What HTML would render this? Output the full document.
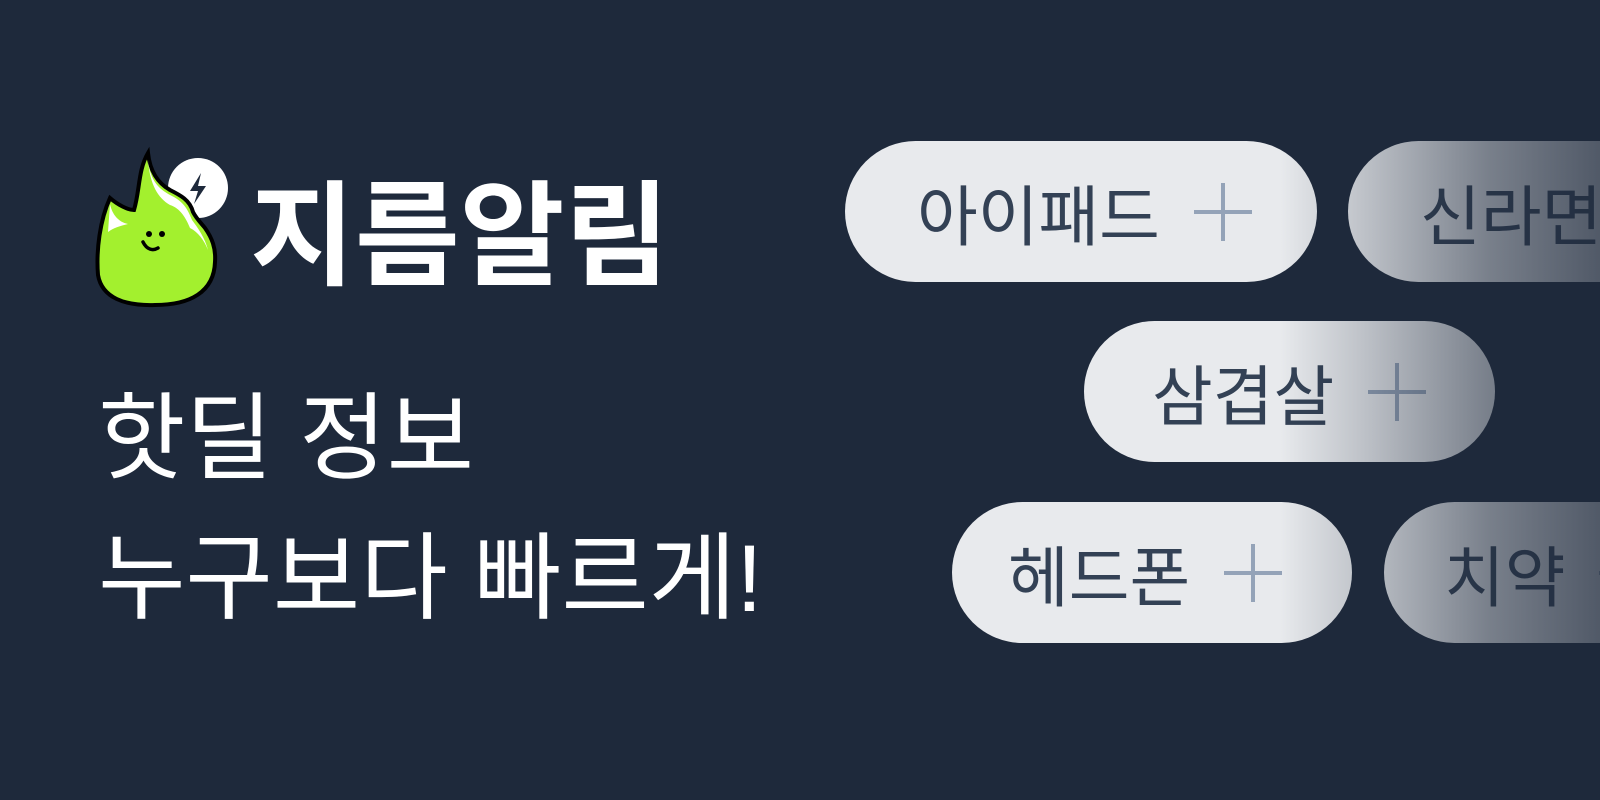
<!DOCTYPE html>
<html><head><meta charset="utf-8"><style>
*{margin:0;padding:0;box-sizing:border-box}
body{width:1600px;height:800px;background:#1e293b;position:relative;overflow:hidden;font-family:"Liberation Sans","Noto Sans CJK KR",sans-serif}
.t{position:absolute;color:#fff;white-space:nowrap}
.pill{position:absolute;height:141px;border-radius:71px;background:#e8eaed;color:#334155;font-size:66px;display:flex;align-items:center;white-space:nowrap;padding-left:72px}
.plus{position:relative;width:58px;height:58px;margin-left:34px}
.plus:before,.plus:after{content:"";position:absolute;background:#94a3b8}
.plus:before{left:27px;top:0;width:4px;height:58px}
.plus:after{top:27px;left:0;height:4px;width:58px}
.fade{position:absolute;left:1280px;top:0;width:320px;height:800px;background:linear-gradient(90deg,rgba(30,41,59,0) 0%,rgba(30,41,59,.2) 25%,rgba(30,41,59,.55) 65%,rgba(30,41,59,.75) 100%)}
</style></head><body>
<svg style="position:absolute;left:90px;top:145px" width="150" height="170" viewBox="90 145 150 170">
<circle cx="198" cy="188" r="30" fill="#fff"/>
<path d="M201 173 L190 191 L198 191 L194 204 L206 186 L198 186 Z" fill="#1e293b"/>
<path d="M148 153 C138 170 140 190 134 210 C128 210 118 205 110 198 C100 220 96 250 98 275 C102 298 125 306 155 305 C190 305 214 292 215 262 C216 248 212 238 205 228 C200 222 196 218 193 212 C190 200 180 195 170 190 C158 183 150 172 148 153 Z" fill="#a3f02e" stroke="#000" stroke-width="4"/>
<path d="M148 160 C150 178 156 188 172 196 C184 202 188 210 192 220 C198 228 205 238 208 250 C204 240 198 232 190 228 C186 218 180 208 170 205 C158 198 150 185 148 160 Z" fill="#fff"/>
<path d="M110 204 C112 214 118 222 128 224 C120 226 113 228 108 232 Z" fill="#fff"/>
<circle cx="149" cy="234" r="3" fill="#000"/><circle cx="162" cy="234" r="3" fill="#000"/>
<path d="M143 242 C147 250 153 251 158 248" stroke="#000" stroke-width="3.5" fill="none" stroke-linecap="round"/>
</svg>
<div class="t" style="left:250px;top:163px;font-size:114px;font-weight:700;line-height:150px">지름알림</div>
<div class="t" style="left:98px;top:379px;font-size:95px;line-height:120px">핫딜 정보</div>
<div class="t" style="left:98px;top:519px;font-size:95px;line-height:120px">누구보다 빠르게!</div>
<div class="pill" style="left:845px;top:141px;width:472px">아이패드<span class="plus"></span></div>
<div class="pill" style="left:1348px;top:141px;width:400px">신라면<span class="plus"></span></div>
<div class="pill" style="left:1084px;top:321px;width:411px;padding-left:68px">삼겹살<span class="plus"></span></div>
<div class="pill" style="left:952px;top:502px;width:400px;padding-left:56px">헤드폰<span class="plus"></span></div>
<div class="pill" style="left:1384px;top:502px;width:400px;padding-left:60px">치약<span class="plus"></span></div>
<div class="fade"></div>
</body></html>
